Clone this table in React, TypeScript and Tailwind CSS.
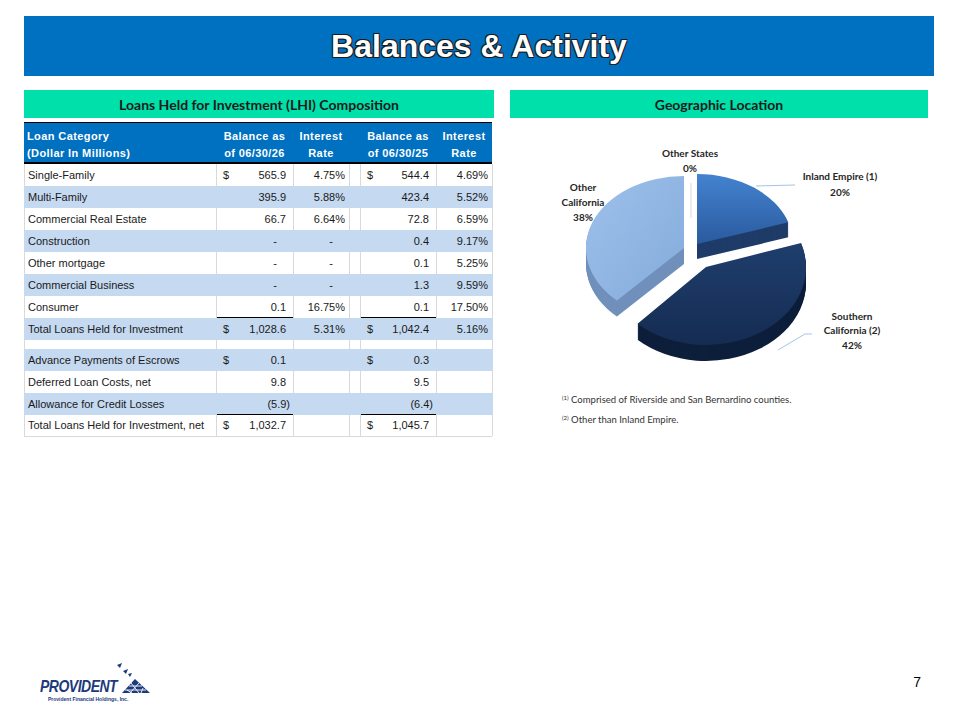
import * as React from "react";

type Row = {
  label: string;
  b26: string;
  r26: string;
  b25: string;
  r25: string;
  dollar?: boolean;
  shaded?: boolean;
  underline?: boolean;
};

const ROWS: Row[] = [
  { label: "Single-Family", b26: "565.9", r26: "4.75%", b25: "544.4", r25: "4.69%", dollar: true },
  { label: "Multi-Family", b26: "395.9", r26: "5.88%", b25: "423.4", r25: "5.52%", shaded: true },
  { label: "Commercial Real Estate", b26: "66.7", r26: "6.64%", b25: "72.8", r25: "6.59%" },
  { label: "Construction", b26: "-", r26: "-", b25: "0.4", r25: "9.17%", shaded: true },
  { label: "Other mortgage", b26: "-", r26: "-", b25: "0.1", r25: "5.25%" },
  { label: "Commercial Business", b26: "-", r26: "-", b25: "1.3", r25: "9.59%", shaded: true },
  { label: "Consumer", b26: "0.1", r26: "16.75%", b25: "0.1", r25: "17.50%", underline: true },
  { label: "Total Loans Held for Investment", b26: "1,028.6", r26: "5.31%", b25: "1,042.4", r25: "5.16%", dollar: true, shaded: true },
];

const ROWS_2: Row[] = [
  { label: "Advance Payments of Escrows", b26: "0.1", r26: "", b25: "0.3", r25: "", dollar: true, shaded: true },
  { label: "Deferred Loan Costs, net", b26: "9.8", r26: "", b25: "9.5", r25: "" },
  { label: "Allowance for Credit Losses", b26: "(5.9)", r26: "", b25: "(6.4)", r25: "", shaded: true, underline: true },
  { label: "Total Loans Held for Investment, net", b26: "1,032.7", r26: "", b25: "1,045.7", r25: "", dollar: true },
];

const COLS = "grid grid-cols-[192px_77px_56px_11px_76px_56px]";

function Amount({ value, dollar }: { value: string; dollar?: boolean }) {
  const pad = value === "-" ? "pr-[16px]" : value.startsWith("(") ? "pr-[3px]" : "pr-[7px]";
  return (
    <div className="flex h-full items-center justify-between pl-[6px]">
      <span>{dollar ? "$" : ""}</span>
      <span className={pad}>{value}</span>
    </div>
  );
}

function Rate({ value }: { value: string }) {
  return (
    <div className={`flex h-full items-center justify-end ${value === "-" ? "pr-[16px]" : "pr-[4px]"}`}>
      {value}
    </div>
  );
}

function TableRow({ row, last }: { row: Row; last?: boolean }) {
  const line = row.shaded ? "border-[#c5d9f1]" : "border-[#d9d9d9]";
  const cell = `h-full border-r ${line}`;
  const under = row.underline ? "shadow-[inset_0_-1px_0_#000]" : "";
  return (
    <div
      className={`${COLS} h-[22px] border-l ${line} ${row.shaded ? "bg-[#c5d9f1]" : "bg-white"} ${
        last ? "border-b border-b-[#d9d9d9]" : ""
      }`}
    >
      <div className={`${cell} flex items-center pl-[3px]`}>{row.label}</div>
      <div className={`${cell} ${under}`}>
        <Amount value={row.b26} dollar={row.dollar} />
      </div>
      <div className={cell}>
        <Rate value={row.r26} />
      </div>
      <div className={cell} />
      <div className={`${cell} ${under}`}>
        <Amount value={row.b25} dollar={row.dollar} />
      </div>
      <div className={cell}>
        <Rate value={row.r25} />
      </div>
    </div>
  );
}

function LoansTable() {
  return (
    <div className="w-[468px] font-['Liberation_Sans',Arial,sans-serif] text-[11px] text-[#1a1a1a]">
      <div className={`${COLS} border-t border-b-2 border-black bg-[#0070c0] pt-[5px] text-[11px] font-bold leading-[17px] tracking-[0.4px] text-white`}>
        <div className="pl-[3px]">
          <div>Loan Category</div>
          <div>(Dollar In Millions)</div>
        </div>
        <div className="text-center">
          <div>Balance as</div>
          <div>of 06/30/26</div>
        </div>
        <div className="text-center">
          <div>Interest</div>
          <div>Rate</div>
        </div>
        <div />
        <div className="text-center">
          <div>Balance as</div>
          <div>of 06/30/25</div>
        </div>
        <div className="text-center">
          <div>Interest</div>
          <div>Rate</div>
        </div>
      </div>
      {ROWS.map((r) => (
        <TableRow key={r.label} row={r} />
      ))}
      <div className={`${COLS} h-[9px] border-l border-[#d9d9d9] bg-white`}>
        {[0, 1, 2, 3, 4, 5].map((i) => (
          <div key={i} className="h-full border-r border-[#d9d9d9]" />
        ))}
      </div>
      {ROWS_2.map((r, i) => (
        <TableRow key={r.label} row={r} last={i === ROWS_2.length - 1} />
      ))}
    </div>
  );
}

type Slice = {
  cx: number;
  cy: number;
  rx: number;
  ry: number;
  a0: number;
  a1: number;
  depth: number;
  side: string;
  grad: string;
};

function pt(cx: number, cy: number, rx: number, ry: number, deg: number) {
  const r = (deg * Math.PI) / 180;
  return [cx + rx * Math.sin(r), cy - ry * Math.cos(r)];
}

function slicePath(s: Slice, dy = 0) {
  const cy = s.cy + dy;
  const [x0, y0] = pt(s.cx, cy, s.rx, s.ry, s.a0);
  const [x1, y1] = pt(s.cx, cy, s.rx, s.ry, s.a1);
  const large = s.a1 - s.a0 > 180 ? 1 : 0;
  return `M${s.cx} ${cy} L${x0.toFixed(2)} ${y0.toFixed(2)} A${s.rx} ${s.ry} 0 ${large} 1 ${x1.toFixed(2)} ${y1.toFixed(2)} Z`;
}

// drawn back to front
const SLICES: Slice[] = [
  { cx: 697, cy: 244, rx: 96, ry: 70, a0: 0, a1: 72, depth: 15, side: "#1f3c69", grad: "inland" },
  { cx: 684, cy: 248, rx: 98, ry: 72, a0: 223.2, a1: 360, depth: 16, side: "#7090bb", grad: "other" },
  { cx: 706, cy: 267, rx: 100, ry: 78, a0: 72, a1: 223.2, depth: 16, side: "#0d1f3b", grad: "south" },
];

function PieChart() {
  const label = "font-['Lato','Open_Sans',sans-serif]";
  return (
    <svg width="418" height="270" viewBox="510 122 418 270" className={label}>
      <defs>
        <linearGradient id="inland" x1="0" y1="0" x2="0" y2="1">
          <stop offset="0" stopColor="#4483d0" />
          <stop offset="1" stopColor="#2a5a9e" />
        </linearGradient>
        <linearGradient id="other" x1="0" y1="0" x2="1" y2="1">
          <stop offset="0" stopColor="#9ec1ea" />
          <stop offset="1" stopColor="#84abdc" />
        </linearGradient>
        <linearGradient id="south" x1="0" y1="0" x2="0" y2="1">
          <stop offset="0" stopColor="#1f3e6d" />
          <stop offset="1" stopColor="#152c52" />
        </linearGradient>
      </defs>
      <line x1="691" y1="183" x2="691" y2="218" stroke="#d0d0d0" strokeWidth="0.8" />
      {SLICES.map((s) => (
        <g key={s.grad}>
          {Array.from({ length: s.depth }, (_, i) => s.depth - i).map((d) => (
            <path key={d} d={slicePath(s, d)} fill={s.side} />
          ))}
          <path d={slicePath(s)} fill={`url(#${s.grad})`} />
        </g>
      ))}
      <polyline points="756,186 795,185" fill="none" stroke="#8db4e2" strokeWidth="0.8" />
      <polyline points="778,350 805,334 812,334" fill="none" stroke="#8db4e2" strokeWidth="0.8" />
      <g fontSize="10" fontWeight="700" fill="#262626" textAnchor="middle">
        <text x="690" y="157">Other States</text>
        <text x="690" y="172">0%</text>
        <text x="840" y="180">Inland Empire (1)</text>
        <text x="840" y="196">20%</text>
        <text x="583" y="191">Other</text>
        <text x="583" y="206">California</text>
        <text x="583" y="221">38%</text>
        <text x="852" y="320">Southern</text>
        <text x="852" y="334">California (2)</text>
        <text x="852" y="349">42%</text>
      </g>
    </svg>
  );
}

function LogoMark() {
  return (
    <svg width="34" height="32" viewBox="0 0 34 32" className="-ml-[1px]">
      <polygon points="1,3 6,1 4,6" fill="#1d3a7c" />
      <polygon points="7,9 12,7 10,12" fill="#1d3a7c" />
      <polygon points="12,12 16,11 14,15" fill="#1d3a7c" />
      <polygon points="6,31 19,17 34,31" fill="#1d3a7c" />
      <g stroke="#fff" strokeWidth="0.9">
        <line x1="13" y1="24" x2="26" y2="24" />
        <line x1="9" y1="28" x2="30" y2="28" />
        <line x1="15" y1="21" x2="23" y2="31" />
        <line x1="23" y1="21" x2="14" y2="31" />
        <line x1="11" y1="28" x2="16" y2="31" />
        <line x1="27" y1="26" x2="25" y2="31" />
      </g>
    </svg>
  );
}

export default function App() {
  return (
    <div className="flex h-[720px] w-[960px] flex-col bg-white">
      <div className="mx-[24px] mt-[16px] flex h-[60px] w-[910px] items-center justify-center bg-[#0070c0]">
        <h1 className="font-['Liberation_Sans',Arial,sans-serif] text-[32px] font-bold leading-none text-white [text-shadow:-1px_-1px_0_#1c1c1c,1px_-1px_0_#1c1c1c,-1px_1px_0_#1c1c1c,1px_1px_0_#1c1c1c]">
          Balances &amp; Activity
        </h1>
      </div>

      <div className="mt-[14px] flex gap-[16px] pl-[24px]">
        <section className="flex w-[470px] flex-col gap-[4px]">
          <div className="flex h-[28px] items-center justify-center bg-[#00e0aa] font-['Lato',sans-serif] text-[14px] font-bold text-[#1a1a1a]">
            Loans Held for Investment (LHI) Composition
          </div>
          <LoansTable />
        </section>

        <section className="flex w-[418px] flex-col gap-[4px]">
          <div className="flex h-[28px] items-center justify-center bg-[#00e0aa] font-['Lato',sans-serif] text-[14px] font-bold text-[#1a1a1a]">
            Geographic Location
          </div>
          <PieChart />
          <div className="-mt-[3px] flex flex-col gap-[7px] pl-[52px] font-['Lato',sans-serif] text-[9.5px] leading-[13px] text-[#333]">
            <div>
              <sup className="text-[6px]">(1)</sup> Comprised of Riverside and San Bernardino counties.
            </div>
            <div>
              <sup className="text-[6px]">(2)</sup> Other than Inland Empire.
            </div>
          </div>
        </section>
      </div>

      <footer className="mt-auto mb-[18px] flex items-center justify-between pl-[40px] pr-[39px]">
        <div className="flex flex-col">
          <div className="flex h-[32px] items-end">
            <span className="inline-block origin-bottom scale-y-120 font-['Liberation_Sans',Arial,sans-serif] text-[14px] font-extrabold italic leading-none tracking-[-0.5px] text-[#1d3a7c]">
              PROVIDENT
            </span>
            <LogoMark />
          </div>
          <span className="mt-[3px] pl-[8px] font-['Liberation_Sans',Arial,sans-serif] text-[5px] font-bold leading-none text-[#1d3a7c]">
            Provident Financial Holdings, Inc.
          </span>
        </div>
        <span className="font-['Liberation_Sans',Arial,sans-serif] text-[14px] text-black">7</span>
      </footer>
    </div>
  );
}
